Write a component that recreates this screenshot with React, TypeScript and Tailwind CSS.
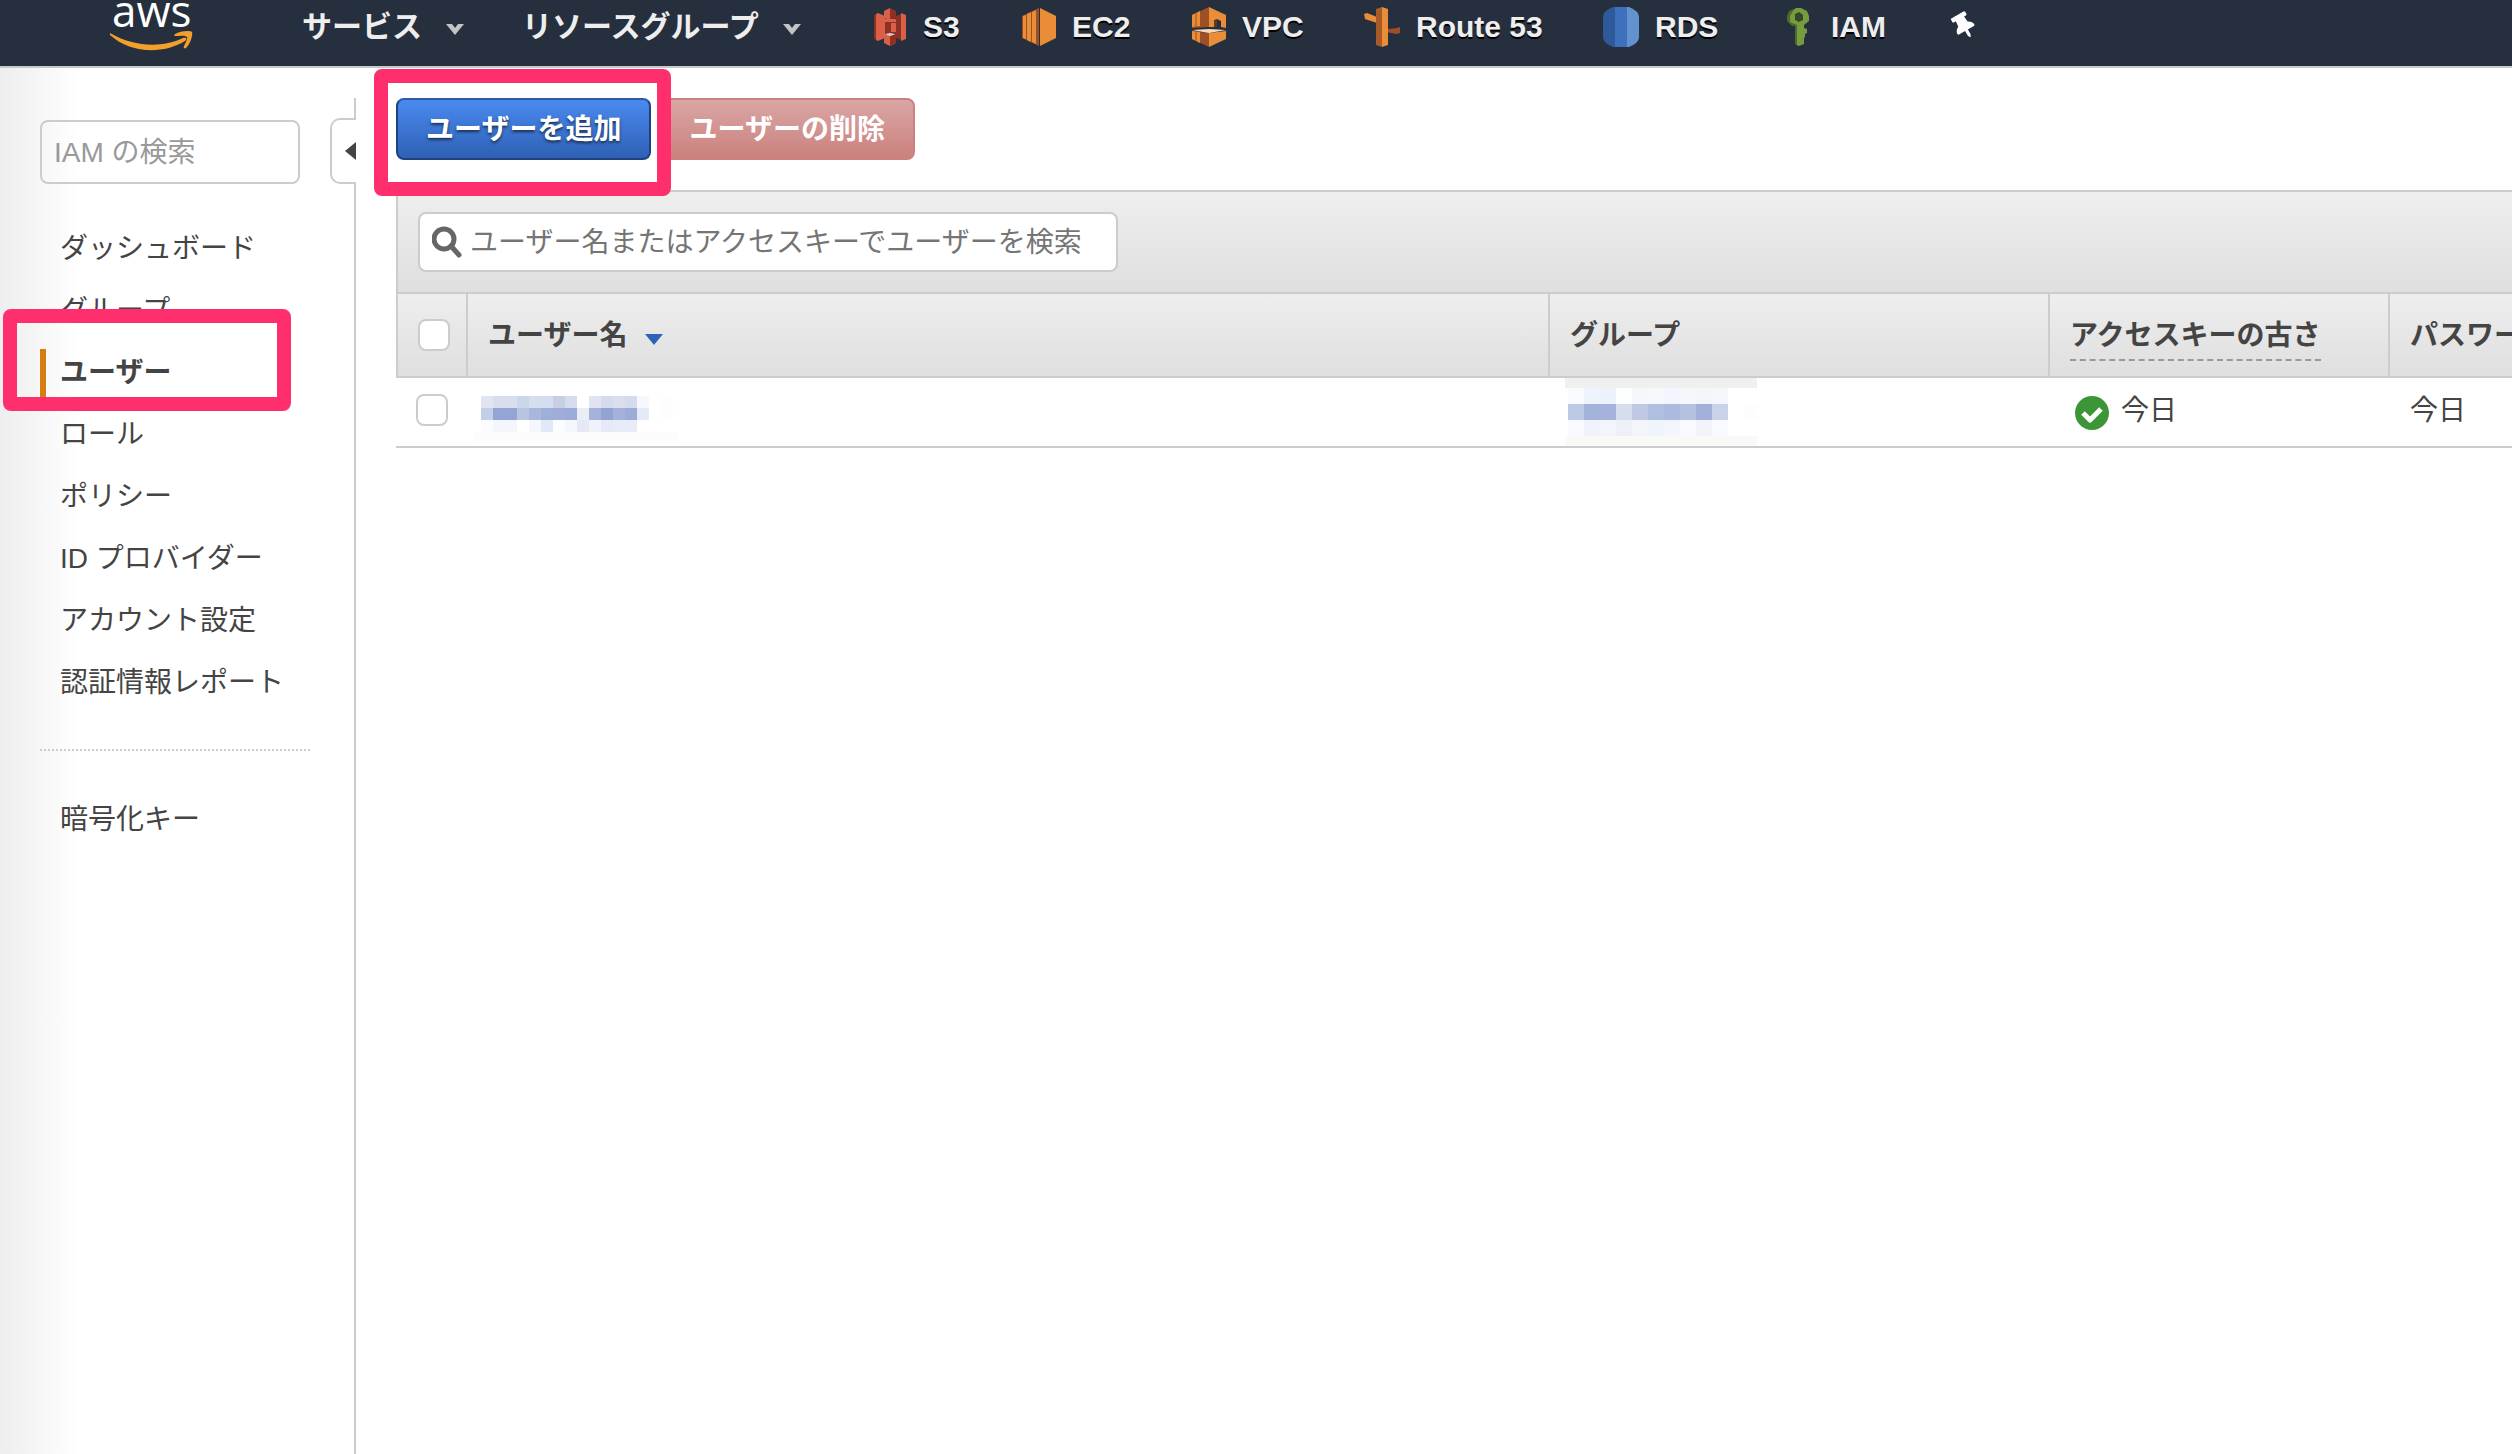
import { ReactNode } from 'react'
import { FaThumbtack } from 'react-icons/fa'

type TPixels = {
    size: number,
    rows: string[][]
}

const S3Icon = () => (
    <svg width="32" height="38" viewBox="0 0 32 38" aria-hidden="true">
        <path d="M0 7l3-1v26l-3-1z" fill="#8c3123" />
        <path d="M2 6l2-1 7 3v22l-7 3-2-1z" fill="#d95f49" />
        <path d="M22 8l5-2v26l-5-2z" fill="#8c3123" />
        <path d="M27 5l5 2v24l-5 2z" fill="#d95f49" />
        <path d="M10 3l6-3v12l-6-2z" fill="#d95f49" />
        <path d="M16 0l6 3v7l-6 2z" fill="#8c3123" />
        <path d="M11 13h11v12H11z" fill="#8c3123" />
        <path d="M11 11h11v3H11zM17 15h5v9h-5z" fill="#d95f49" />
        <path d="M10 27h12v8l-6 3-6-3z" fill="#d95f49" />
        <path d="M16 28l6-2v9l-6 3z" fill="#8c3123" />
        <path d="M10 26l6-1 6 1-6 2z" fill="#f2c0b6" />
    </svg>
)

const Ec2Icon = () => (
    <svg width="34" height="38" viewBox="0 0 34 38" aria-hidden="true">
        <path d="M0 8l17-8v38L0 30z" fill="#9d5025" />
        <path d="M18 0l16 8v22l-16 8z" fill="#e98d39" />
        <path d="M1 8l3-1v24l-3-1zM5 6l4-2v30l-4-2zM10 4l4-2v34l-4-2z" fill="#e98d39" />
    </svg>
)

const VpcIcon = () => (
    <svg width="34" height="40" viewBox="0 0 34 40" aria-hidden="true">
        <path d="M0 8l17-8v20L0 21z" fill="#9d5025" />
        <path d="M0 24l17 2v14L0 32z" fill="#9d5025" />
        <path d="M0 8l8-4v15l-8 1zM0 24l8 1v11l-8-4z" fill="#e98d39" />
        <path d="M4 6v14M4 25v9" stroke="#9d5025" />
        <path d="M17 0l17 8v13l-5-1v-6l-4-2v8h-8zM17 26l17-2v8l-17 8z" fill="#e98d39" />
        <path d="M22 13l3-1v8h-3z" fill="#5f3a25" />
        <path d="M0 23l17-1 17 1-17 3z" fill="#fbd9b9" />
    </svg>
)

const RouteIcon = () => (
    <svg width="36" height="40" viewBox="0 0 36 40" aria-hidden="true">
        <path d="M0 7l3-1 10 4v6L1 12z" fill="#e98d39" />
        <path d="M22 20l3 2 8-1 3-1v6l-3 1-11-2z" fill="#9d5025" />
        <path d="M12 2l6-2v40l-6-2z" fill="#a85a29" />
        <path d="M18 0l6 2v36l-6 2z" fill="#e98d39" />
    </svg>
)

const RdsIcon = () => (
    <svg width="36" height="40" viewBox="0 0 36 40" aria-hidden="true">
        <path d="M12 0h-2Q0 4 0 10v20q0 6 10 10h2z" fill="#2e5a9c" />
        <path d="M12 0h12v40H12z" fill="#3f70bd" />
        <path d="M24 0h2q10 4 10 10v20q0 6-10 10h-2z" fill="#6393cf" />
    </svg>
)

const IamIcon = () => (
    <svg width="22" height="38" viewBox="0 0 22 38" aria-hidden="true">
        <path d="M9 0L2 3 0 8v5l5 5h3v18l3 2z" fill="#4c6a2b" />
        <path d="M9 0h5l6 3 2 5v5l-5 4v3l3 1v4l-2 1v3l-1 1v6l-5 2-2-1V17l-7-3V8l3-5z" fill="#759c3e" />
        <path d="M8 6l4-2 4 3v5l-4 2-4-2z" fill="#35482a" />
    </svg>
)

const Caret = () => (
    <svg className="mt-[4px]" width="18" height="11" viewBox="0 0 18 11" aria-hidden="true">
        <path d="M0 0h6l3 4 3-4h6L9 11z" fill="#c4c4c4" />
    </svg>
)

const services: { name: string, icon: ReactNode, space: string }[] = [
    { name: 'S3', icon: <S3Icon />, space: 'gap-[17px] w-[148px]' },
    { name: 'EC2', icon: <Ec2Icon />, space: 'gap-[16px] w-[170px]' },
    { name: 'VPC', icon: <VpcIcon />, space: 'gap-[16px] w-[172px]' },
    { name: 'Route 53', icon: <RouteIcon />, space: 'gap-[16px] w-[239px]' },
    { name: 'RDS', icon: <RdsIcon />, space: 'gap-[16px] w-[184px]' },
    { name: 'IAM', icon: <IamIcon />, space: 'gap-[22px] w-[164px]' },
]

const menus = ['ダッシュボード', 'グループ', 'ユーザー', 'ロール', 'ポリシー', 'ID プロバイダー', 'アカウント設定', '認証情報レポート']

const userPixels: TPixels = {
    size: 12,
    rows: [
        ['#e1e5f1', '#d8deee', '#d8deee', '#cad7eb', '#d5deec', '#d5deee', '#c7cfe4', '#d6dcee', '#ffffff', '#e0e4f0', '#d5dbec', '#dadff0', '#d5dbec', '#f6f8fd'],
        ['#c4cfe7', '#93a5d5', '#93a5d5', '#b8c5e2', '#a9b7db', '#9cb0da', '#a1add8', '#9aacd7', '#ebeef6', '#a5b3da', '#92a3d5', '#a5b0db', '#9dabd8', '#e4ebf6'],
        ['#fcfcff', '#f5f6fc', '#f5f6fc', '#ffffff', '#f5f7fd', '#e2e8f5', '#fcfdff', '#f5f7fd', '#e6e9f5', '#f0f2fb', '#e6eaf6', '#e8ecf8', '#e8ecf8', '#ffffff'],
    ]
}

const groupPixels: TPixels = {
    size: 16,
    rows: [
        ['#f8faff', '#eff3fc', '#ecf2fb', '#fcfeff', '#f5f7fd', '#f7f8fd', '#f3f6ff', '#f5f7fd', '#f3f5fb', '#f5f7fd'],
        ['#bdc9e4', '#a3b3dc', '#a5b3dc', '#d6ddec', '#bfc9e4', '#afbfe0', '#acbade', '#b6c1e0', '#a2b0da', '#c8d2e9'],
        ['#f8faff', '#f0f3fc', '#f3f5fc', '#edf0f7', '#f3f5fb', '#f0f4fd', '#f3f6fc', '#f8faff', '#f2f4f9', '#f8faff'],
    ]
}

const Pixels = ({ size, rows }: TPixels) => (
    <>
        {rows.map((row, y) => row.map((color, x) => <rect key={`${x}-${y}`} x={x * size} y={y * size} width={size} height={size} fill={color} />))}
    </>
)

const Header = () => (
    <header className="flex h-[68px] items-start border-b-2 border-[#c8c8c8] bg-[#262f3e] pl-[110px] text-[30px] leading-[54px] font-bold text-[#eeeeee] [text-shadow:0_2px_0_#000]">
        <a href="#" aria-label="aws" className="w-[192px] [text-shadow:none]">
            <svg width="84" height="52" viewBox="0 0 84 52">
                <text x="2" y="27" fontFamily="Open Sans, sans-serif" fontSize="44" fontWeight="400" fill="#ffffff">aws</text>
                <path d="M0 33c24 14 52 15 73 5 3-1 5 1 2 3C52 55 20 53 0 35c-1-1-1-2 0-2z" fill="#f29f2c" />
                <path d="M65 34c5-3 15-4 17-2 1 2-1 11-6 16-1 1-3 0-2-2 2-4 4-8 3-9-2-2-8-1-12-1-1 0-1-1 0-2z" fill="#f29f2c" />
            </svg>
        </a>
        <button type="button" className="flex w-[220px] items-center gap-[24px]">サービス<Caret /></button>
        <button type="button" className="flex w-[352px] items-center gap-[24px]">リソースグループ<Caret /></button>
        {
            services.map((item) => (
                <a key={item.name} href="#" className={`flex items-center whitespace-nowrap ${item.space}`}>
                    {item.icon}
                    <span>{item.name}</span>
                </a>
            ))
        }
        <button type="button" aria-label="ピン" className="flex h-[52px] items-center">
            <FaThumbtack className="size-[26px] -rotate-30 text-white" />
        </button>
    </header>
)

const Sidebar = () => (
    <aside className="flex w-[356px] shrink-0 bg-linear-to-r from-[#eeeeee] to-white to-[80px]">
        <div className="w-[330px] pt-[52px] pl-[40px]">
            <input type="text" aria-label="IAM の検索" placeholder="IAM の検索" className="h-[64px] w-[260px] rounded-[8px] border-2 border-[#cccccc] bg-transparent px-[12px] pt-[2px] placeholder:text-[#999999]" />
            <nav>
                <ul className="mt-[34px] w-[270px] border-b-2 border-dotted border-[#cccccc] pb-[35px]">
                    {
                        menus.map((item) => {
                            const active = item === 'ユーザー'
                            return (
                                <li key={item} className="relative flex h-[62px] items-center">
                                    <a href="#" className={active ? 'border-l-6 border-[#d47d12] pl-[14px] leading-[48px] font-bold' : 'pl-[20px] leading-[48px]'}>{item}</a>
                                    {active && <div className="pointer-events-none absolute -top-[33px] -left-[37px] h-[102px] w-[288px] rounded-[8px] border-14 border-[#ff2f6d]" />}
                                </li>
                            )
                        })
                    }
                </ul>
                <a href="#" className="mt-[38px] flex h-[62px] items-center pl-[20px]">暗号化キー</a>
            </nav>
        </div>
        {/* Collapse handle */}
        <div className="flex w-[26px] flex-col items-end pt-[30px]">
            <div className="h-[20px] w-[2px] bg-[#cccccc]" />
            <button type="button" aria-label="メニューを閉じる" className="flex h-[66px] w-[26px] items-center justify-end rounded-l-[10px] border-2 border-r-0 border-[#cccccc] bg-white">
                <svg width="11" height="18" viewBox="0 0 11 18"><path d="M11 0v18L0 9z" fill="#444444" /></svg>
            </button>
            <div className="w-[2px] flex-1 bg-[#cccccc]" />
        </div>
    </aside>
)

const headCell = 'h-[86px] border-y-2 border-[#cccccc] bg-linear-to-b from-[#eeeeee] to-[#dfdfdf] pl-[20px] text-left font-bold whitespace-nowrap'
const bodyCell = 'h-[70px] border-b-2 border-[#cccccc] pl-[20px]'
const pixelCell = 'h-[70px] border-b-2 border-[#cccccc]'
const checkbox = 'block size-[32px] appearance-none rounded-[8px] border-2 border-[#cccccc] bg-white checked:bg-[#2f63ba]'

const UserTable = () => (
    <table className="w-full table-fixed border-separate border-spacing-0">
        <colgroup>
            <col className="w-[72px]" />
            <col />
            <col className="w-[500px]" />
            <col className="w-[340px]" />
            <col className="w-[122px]" />
        </colgroup>
        <thead>
            <tr>
                <th className={`${headCell} border-x-2`}><input type="checkbox" aria-label="すべて選択" className={checkbox} /></th>
                <th className={`${headCell} border-r-2 pt-[2px]`}>
                    <button type="button" className="flex items-center gap-[18px]">
                        ユーザー名
                        <svg className="mt-[6px]" width="18" height="11" viewBox="0 0 18 11" aria-hidden="true"><path d="M0 0h18L9 11z" fill="#2f63ba" /></svg>
                    </button>
                </th>
                <th className={`${headCell} border-r-2 pt-[2px]`}>グループ</th>
                <th className={`${headCell} border-r-2 pt-[2px]`}>
                    <span className="mt-[4px] inline-block border-b-2 border-dashed border-[#999999] pb-[3px] leading-[40px]">アクセスキーの古さ</span>
                </th>
                <th className={`${headCell} overflow-hidden pt-[2px]`}>パスワー</th>
            </tr>
        </thead>
        <tbody>
            <tr>
                <td className={`${bodyCell} pb-[4px]`}><input type="checkbox" aria-label="ユーザーを選択" className={checkbox} /></td>
                <td className={`${pixelCell} pl-[7px]`}>
                    <svg className="block" width="202" height="68" viewBox="-6 -18 202 68" shapeRendering="crispEdges" aria-hidden="true">
                        <rect x="-6" y="36" width="202" height="9" fill="#fcfcfb" />
                        <rect x="180" y="0" width="12" height="24" fill="#fdfdfd" />
                        <Pixels {...userPixels} />
                    </svg>
                </td>
                <td className={`${pixelCell} pl-[15px]`}>
                    <svg className="block" width="192" height="68" viewBox="-3 -10 192 68" shapeRendering="crispEdges" aria-hidden="true">
                        <rect x="-3" y="-10" width="192" height="10" fill="#f0f0ee" />
                        <rect x="-3" y="48" width="192" height="10" fill="#f9f9f8" />
                        <rect x="176" y="16" width="13" height="16" fill="#fdfdfd" />
                        <Pixels {...groupPixels} />
                    </svg>
                </td>
                <td className={`${bodyCell} pb-[2px]`}>
                    <div className="flex items-center gap-[12px] pl-[5px]">
                        <svg className="mt-[4px]" width="34" height="34" viewBox="0 0 34 34" aria-hidden="true">
                            <circle cx="17" cy="17" r="17" fill="#3c9638" />
                            <path d="M8 17l7 7 11-11" fill="none" stroke="#ffffff" strokeWidth="5" strokeLinejoin="round" />
                        </svg>
                        今日
                    </div>
                </td>
                <td className={`${bodyCell} pb-[2px]`}>今日</td>
            </tr>
        </tbody>
    </table>
)

const App = () => {
    return (
        <div className="flex min-h-screen flex-col overflow-hidden bg-white font-['Liberation_Sans','Noto_Sans_CJK_JP',sans-serif] text-[28px] leading-[40px] text-[#444444]">
            <Header />
            <div className="flex flex-1">
                <Sidebar />
                <main className="min-w-0 flex-1 pt-[30px] pl-[40px]">
                    <div className="flex gap-[8px] font-bold text-white">
                        <div className="relative">
                            <button type="button" className="h-[62px] rounded-[8px] border-2 border-[#1e4280] border-t-[#2a5bab] bg-linear-to-b from-[#4a8af0] to-[#2e61b5] px-[28px] pt-[2px] [text-shadow:0_2px_3px_#1b2f55]">ユーザーを追加</button>
                            <div className="pointer-events-none absolute -top-[29px] -left-[22px] h-[127px] w-[297px] rounded-[8px] border-14 border-[#ff2f6d]" />
                        </div>
                        <button type="button" className="h-[62px] rounded-[8px] border-2 border-[#cb827f] bg-linear-to-b from-[#d9a6a5] to-[#cb817e] px-[28px] pt-[2px]">ユーザーの削除</button>
                    </div>
                    <div className="mt-[30px] border-t-2 border-l-2 border-[#cccccc] bg-linear-to-b from-[#eeeeee] to-[#dfdfdf] px-[20px] py-[20px]">
                        <label className="flex h-[60px] w-[700px] items-center gap-[8px] rounded-[8px] border-2 border-[#cccccc] bg-white pl-[12px]">
                            <svg width="30" height="32" viewBox="0 0 30 32" aria-hidden="true">
                                <circle cx="12" cy="13" r="10" fill="none" stroke="#666666" strokeWidth="5" />
                                <path d="M19 20l8 9" stroke="#666666" strokeWidth="5" strokeLinecap="round" />
                            </svg>
                            <input type="text" aria-label="ユーザーを検索" placeholder="ユーザー名またはアクセスキーでユーザーを検索" className="min-w-0 flex-1 pt-[2px] placeholder:text-[#757575]" />
                        </label>
                    </div>
                    <UserTable />
                </main>
            </div>
        </div>
    )
}

export default App
